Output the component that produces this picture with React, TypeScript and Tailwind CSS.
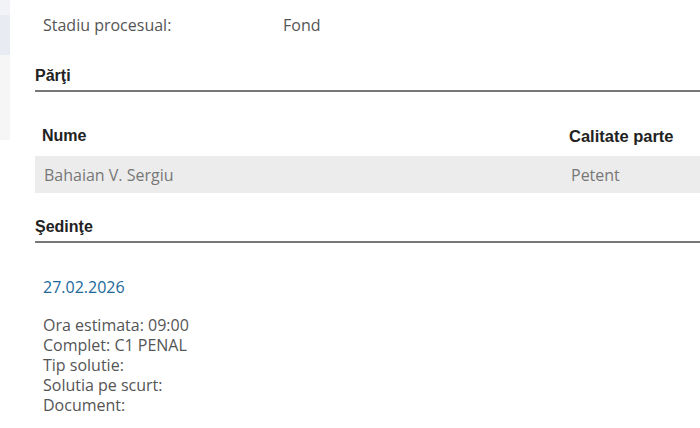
import React from "react";

const sedinta = [
  "Ora estimata: 09:00",
  "Complet: C1 PENAL",
  "Tip solutie:",
  "Solutia pe scurt:",
  "Document:",
];

export default function App() {
  return (
    <div className="relative flex h-[428px] w-[700px] overflow-hidden bg-white">
      {/* left sidebar remnant */}
      <div className="flex w-[10px] flex-col">
        <div className="h-[15px] bg-[#f2f3f6]" />
        <div className="h-[40px] bg-[#e8ebf2]" />
        <div className="h-[85px] bg-[#f6f6f7]" />
      </div>

      <div className="flex-1 pl-[25px] font-['Open_Sans',sans-serif]">
        {/* stadiu procesual */}
        <div className="flex h-[50px] items-center pl-[8px] text-[16px] text-[#555]">
          <span className="w-[240px]">Stadiu procesual:</span>
          <span>Fond</span>
        </div>

        {/* parti */}
        <div className="flex h-[42px] items-end border-b-2 border-[#777] pb-[6px] font-['Liberation_Sans',Arial,sans-serif] text-[16px] font-bold leading-none text-[#222]">
          Părţi
        </div>

        <div className="h-[24px]" />
        <div className="flex h-[40px] items-center font-['Liberation_Sans',Arial,sans-serif] text-[16px] font-bold text-[#222]">
          <span className="w-[534px] pl-[7px]">Nume</span>
          <span className="text-[16.5px]">Calitate parte</span>
        </div>
        <div className="flex h-[37px] items-center bg-[#ececec] text-[16px] text-[#777]">
          <span className="w-[536px] pl-[9px]">Bahaian V. Sergiu</span>
          <span>Petent</span>
        </div>

        {/* sedinte */}
        <div className="flex h-[50px] items-end border-b-2 border-[#777] pb-[6px] font-['Liberation_Sans',Arial,sans-serif] text-[16px] font-bold leading-none text-[#222]">
          Şedinţe
        </div>

        <div className="pl-[8px] pt-[32px] text-[16px]">
          <div className="leading-[24px] text-[#21689a]">27.02.2026</div>
          <div className="mt-[16px] text-[#555]">
            {sedinta.map((line) => (
              <div key={line} className="leading-[20px]">
                {line}
              </div>
            ))}
          </div>
        </div>
      </div>
    </div>
  );
}
